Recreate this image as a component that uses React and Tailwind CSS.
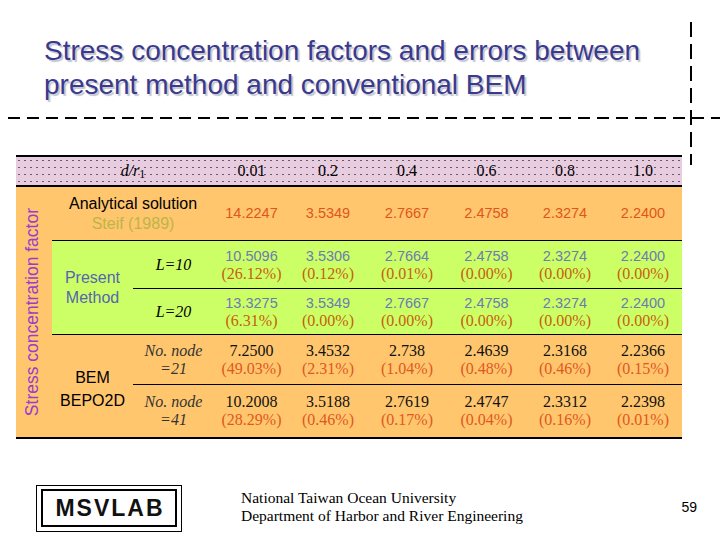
import React from "react";

const cols = ["w-[75px]", "w-[78px]", "w-[80px]", "w-[79px]", "w-[78px]", "w-[78px]"];
const heads = ["0.01", "0.2", "0.4", "0.6", "0.8", "1.0"];
const analytic = ["14.2247", "3.5349", "2.7667", "2.4758", "2.3274", "2.2400"];
const l10 = [
  ["10.5096", "(26.12%)"],
  ["3.5306", "(0.12%)"],
  ["2.7664", "(0.01%)"],
  ["2.4758", "(0.00%)"],
  ["2.3274", "(0.00%)"],
  ["2.2400", "(0.00%)"],
];
const l20 = [
  ["13.3275", "(6.31%)"],
  ["3.5349", "(0.00%)"],
  ["2.7667", "(0.00%)"],
  ["2.4758", "(0.00%)"],
  ["2.3274", "(0.00%)"],
  ["2.2400", "(0.00%)"],
];
const n21 = [
  ["7.2500", "(49.03%)"],
  ["3.4532", "(2.31%)"],
  ["2.738", "(1.04%)"],
  ["2.4639", "(0.48%)"],
  ["2.3168", "(0.46%)"],
  ["2.2366", "(0.15%)"],
];
const n41 = [
  ["10.2008", "(28.29%)"],
  ["3.5188", "(0.46%)"],
  ["2.7619", "(0.17%)"],
  ["2.4747", "(0.04%)"],
  ["2.3312", "(0.16%)"],
  ["2.2398", "(0.01%)"],
];

const serif = "font-['Liberation_Serif',serif]";
const sans = "font-['Liberation_Sans',Arial,sans-serif]";

function PresentCells({ data }) {
  return data.map((d, i) => (
    <div key={i} className={`${cols[i]} flex flex-col items-center justify-center leading-[18px]`}>
      <span className={`${sans} text-[14.5px] text-[#6a7cb0]`}>{d[0]}</span>
      <span className={`${serif} text-[16px] text-[#c8600f]`}>{d[1]}</span>
    </div>
  ));
}

function BemCells({ data }) {
  return data.map((d, i) => (
    <div key={i} className={`${cols[i]} flex flex-col items-center justify-center leading-[18px] ${serif} text-[16px]`}>
      <span className="text-[#111111]">{d[0]}</span>
      <span className="text-[#e0581e]">{d[1]}</span>
    </div>
  ));
}

export default function App() {
  return (
    <div className={`relative w-[720px] h-[540px] bg-white overflow-hidden ${sans}`}>
      <svg className="absolute left-[690px] top-[22px]" width="2" height="143">
        <line x1="1" y1="0" x2="1" y2="143" stroke="#000" strokeWidth="2" strokeDasharray="15 7" />
      </svg>

      <div className="pl-[44px] pt-[34px] text-[28px] leading-[34px] text-[#3a3a8c] [text-shadow:2px_2px_1px_#c4c4d0]">
        <div>Stress concentration factors and errors between</div>
        <div>present method and conventional BEM</div>
      </div>

      <svg width="712" height="2" className="block ml-[8px] mt-[15px]">
        <line x1="0" y1="1" x2="712" y2="1" stroke="#000" strokeWidth="2" strokeDasharray="12 7" />
      </svg>

      <div className="ml-[16px] mt-[36px] w-[666px]">
        <div className={`flex h-[32px] border-y-2 border-black bg-[#e8cce0] bg-[image:radial-gradient(#6a5a66_0.5px,transparent_0.9px)] bg-[length:6px_7px] ${serif} text-[16px] text-black`}>
          <div className="w-[36px]" />
          <div className="w-[162px] flex items-center justify-center">
            <span className="italic">d/r</span>
            <sub className="text-[12px]">1</sub>
          </div>
          {heads.map((h, i) => (
            <div key={i} className={`${cols[i]} flex items-center justify-center`}>
              {h}
            </div>
          ))}
        </div>

        <div className="flex h-[252px] border-b-2 border-black">
          <div className="w-[36px] bg-[#ffc66e] flex items-center justify-center pr-[4px]">
            <span className="[writing-mode:vertical-rl] rotate-180 text-[17.5px] leading-[20px] text-[#9a3ccc] whitespace-nowrap">
              Stress concentration factor
            </span>
          </div>
          <div className="flex-1 flex flex-col">
            <div className="flex h-[53px] bg-[#ffc66e]">
              <div className="w-[162px] flex flex-col items-center justify-center text-[16px] leading-[20px]">
                <span className="text-black">Analytical solution</span>
                <span className="text-[#bdb548]">Steif (1989)</span>
              </div>
              {analytic.map((v, i) => (
                <div key={i} className={`${cols[i]} flex items-center justify-center text-[14.5px] text-[#e0561a]`}>
                  {v}
                </div>
              ))}
            </div>

            <div className="flex h-[94px] bg-[#ccff66] border-t border-black">
              <div className="w-[81px] flex flex-col items-center justify-center text-[16px] leading-[20px] text-[#5566b0]">
                <span>Present</span>
                <span>Method</span>
              </div>
              <div className="flex-1 flex flex-col">
                <div className="flex h-[47px]">
                  <div className={`w-[81px] flex items-center justify-center ${serif} italic text-[16px] text-black`}>L=10</div>
                  <PresentCells data={l10} />
                </div>
                <div className="flex flex-1 border-t border-black">
                  <div className={`w-[81px] flex items-center justify-center ${serif} italic text-[16px] text-black`}>L=20</div>
                  <PresentCells data={l20} />
                </div>
              </div>
            </div>

            <div className="flex h-[103px] bg-[#ffc66e] border-t border-black">
              <div className="w-[81px] flex flex-col items-center justify-center pt-[6px] text-[16px] leading-[23px] text-black">
                <span>BEM</span>
                <span>BEPO2D</span>
              </div>
              <div className="flex-1 flex flex-col">
                <div className="flex h-[49px]">
                  <div className={`w-[81px] flex flex-col items-center justify-center ${serif} italic text-[16px] leading-[18px] text-[#333333]`}>
                    <span>No. node</span>
                    <span>=21</span>
                  </div>
                  <BemCells data={n21} />
                </div>
                <div className="flex flex-1 border-t border-black">
                  <div className={`w-[81px] flex flex-col items-center justify-center ${serif} italic text-[16px] leading-[18px] text-[#333333]`}>
                    <span>No. node</span>
                    <span>=41</span>
                  </div>
                  <BemCells data={n41} />
                </div>
              </div>
            </div>
          </div>
        </div>
      </div>

      <div className="flex items-start mt-[46px]">
        <div className="ml-[36px] w-[146px] h-[47px] border border-black pt-[3px] pb-[4px] px-[4px]">
          <div className="h-full border-2 border-black flex items-center justify-center pl-[2px] text-[23px] leading-[24px] font-bold tracking-[2px] text-[#111111]">
            MSVLAB
          </div>
        </div>
        <div className={`ml-[59px] mt-[4px] ${serif} text-[15.5px] leading-[18px] text-black`}>
          <div>National Taiwan Ocean University</div>
          <div>Department of Harbor and River Engineering</div>
        </div>
        <div className="ml-auto mr-[23px] mt-[14px] text-[14px] leading-[16px] text-black">59</div>
      </div>
    </div>
  );
}
